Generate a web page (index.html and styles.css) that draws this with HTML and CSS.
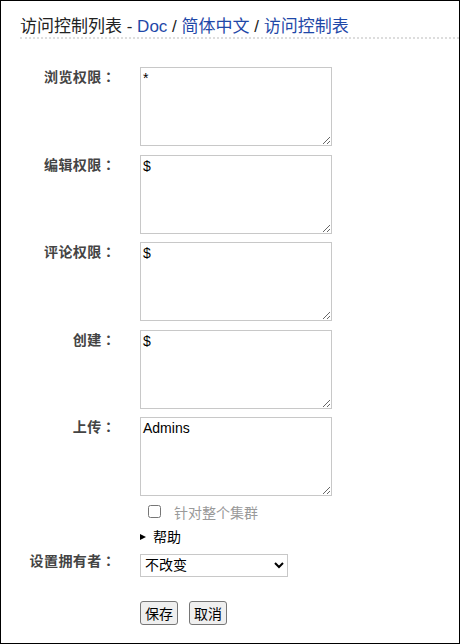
FILE: index.html
```html
<!DOCTYPE html>
<html lang="zh">
<head>
<meta charset="utf-8">
<title>访问控制列表</title>
<link rel="stylesheet" href="styles.css">
</head>
<body>
<div class="page">
  <h1 class="title">访问控制列表 - <a href="#">Doc</a> / <a href="#">简体中文</a> / <a href="#">访问控制表</a></h1>
  <form class="acl">
    <label class="lbl">浏览权限：</label>
    <textarea class="ta">*</textarea>
    <label class="lbl">编辑权限：</label>
    <textarea class="ta">$</textarea>
    <label class="lbl">评论权限：</label>
    <textarea class="ta">$</textarea>
    <label class="lbl">创建：</label>
    <textarea class="ta">$</textarea>
    <label class="lbl">上传：</label>
    <textarea class="ta">Admins</textarea>
    <div class="ctl cluster"><input type="checkbox" class="cb"><span class="cb-text">针对整个集群</span></div>
    <details class="ctl help"><summary>帮助</summary></details>
    <label class="lbl owner">设置拥有者：</label>
    <select class="sel"><option>不改变</option></select>
    <div class="ctl buttons"><button type="button" class="btn">保存</button><button type="button" class="btn">取消</button></div>
  </form>
</div>
</body>
</html>
```
FILE: styles.css
```css
html, body {
  margin: 0;
  padding: 0;
  background: #fff;
}
.page {
  box-sizing: border-box;
  width: 460px;
  height: 644px;
  border: 1px solid #000;
  font-family: "Liberation Sans", "Noto Sans CJK SC", sans-serif;
  color: #222;
}
.title {
  margin: 0 0 0 19px;
  padding-top: 15px;
  font-size: 17px;
  font-weight: normal;
  line-height: 21px;
  color: #222;
  border-bottom: 2px dotted #ddd;
}
.title a {
  color: #1f48a8;
  text-decoration: none;
}
.acl {
  display: grid;
  grid-template-columns: 115px 192px;
  column-gap: 24px;
  row-gap: 8.5px;
  margin-top: 28px;
}
.lbl {
  grid-column: 1;
  text-align: right;
  font-family: "Noto Sans CJK JP", "Noto Sans CJK SC", sans-serif;
  font-feature-settings: "locl" 0;
  font-size: 14px;
  letter-spacing: 0.4px;
  line-height: 18px;
  font-weight: bold;
  color: #444;
  align-self: start;
}
.ta {
  grid-column: 2;
  box-sizing: border-box;
  width: 192px;
  height: 79px;
  margin: 0;
  padding: 2px;
  border: 1px solid #c8c8c8;
  font-family: "Liberation Sans", "Noto Sans CJK SC", sans-serif;
  font-size: 14px;
  line-height: 16px;
  color: #000;
}
.ctl {
  grid-column: 2;
}
.cluster {
  display: flex;
  align-items: center;
  height: 20px;
  margin-top: -3px;
}
.cb {
  width: 13px;
  height: 13px;
  margin: 0 0 0 8px;
}
.cb-text {
  margin-left: 13px;
  font-size: 14px;
  color: #999;
}
.help {
  font-size: 14px;
  line-height: 20px;
  color: #000;
  margin-top: -3px;
}
.help summary {
  list-style: none;
  display: flex;
  align-items: center;
  cursor: pointer;
}
.help summary::-webkit-details-marker {
  display: none;
}
.help summary::before {
  content: "";
  width: 0;
  height: 0;
  border-left: 6px solid #000;
  border-top: 3.5px solid transparent;
  border-bottom: 3.5px solid transparent;
  margin-right: 7px;
}
.owner {
  margin-top: -5px;
}
.sel {
  grid-column: 2;
  box-sizing: border-box;
  width: 148px;
  height: 23px;
  margin: -2px 0 0 0;
  border: 1px solid #c8c8c8;
  background: #fff;
  font-family: "Liberation Sans", "Noto Sans CJK SC", sans-serif;
  font-size: 14px;
  color: #000;
}
.buttons {
  display: flex;
  gap: 11px;
  margin-top: 16px;
}
.btn {
  box-sizing: border-box;
  height: 24px;
  padding: 2px 4px;
  margin: 0;
  border: 1px solid #767676;
  border-radius: 3px;
  background: #efefef;
  font-family: "Noto Sans CJK SC", sans-serif;
  font-size: 14px;
  line-height: 18px;
  color: #000;
}
```
